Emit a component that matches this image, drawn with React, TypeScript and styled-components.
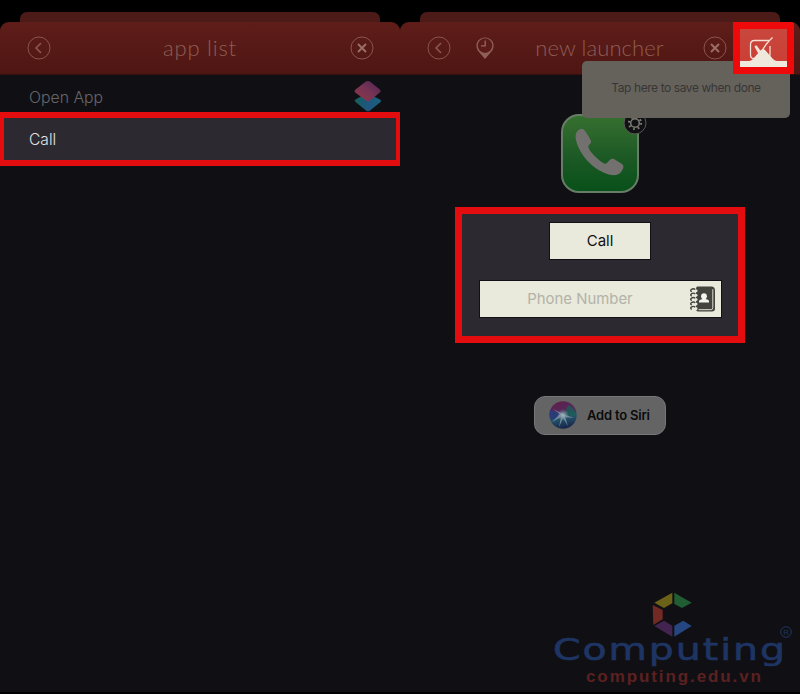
import React from 'react';
import styled, { createGlobalStyle } from 'styled-components';

const Global = createGlobalStyle`
  * { box-sizing: border-box; }
  body { margin: 0; background: #000; font-family: Inter, "Liberation Sans", sans-serif; }
  svg { display: block; flex: none; }
`;

const Page = styled.main`
  display: grid;
  grid-template-columns: 400px 400px;
  width: 800px;
  height: 694px;
  overflow: hidden;
  position: relative;
  background: #000;
`;

const Phone = styled.section`
  display: flex;
  flex-direction: column;
  height: 692px;
  padding-top: 12px;
  position: relative;
`;

const BackCard = styled.div`
  height: 10px;
  flex: none;
  margin: 0 20px;
  border-radius: 7px 7px 0 0;
  background: #4d1b17;
`;

const Card = styled.div`
  flex: 1;
  display: flex;
  flex-direction: column;
  border-radius: 9px 9px 0 0;
  overflow: hidden;
  background: #101014;
`;

const Header = styled.header<{ $cols: string }>`
  display: grid;
  grid-template-columns: ${(p) => p.$cols};
  align-items: center;
  height: 53px;
  flex: none;
  background: linear-gradient(#5f1d19, #4e1613);
  border-bottom: 1px solid #35100f;
`;

const Title = styled.h1<{ $spacing: number }>`
  display: flex;
  justify-content: center;
  margin: 0;
  font: 300 22px/26px Lato, sans-serif;
  letter-spacing: ${(p) => p.$spacing}px;
  color: #8d5d54;
  white-space: nowrap;
`;

const IconButton = styled.button`
  display: flex;
  justify-content: center;
  min-width: 0;
  padding: 0;
  border: 0;
  background: none;
`;

const Row = styled.div`
  display: flex;
  justify-content: space-between;
  height: 37px;
  flex: none;
  padding: 0 18px 0 29px;
  font-size: 15.8px;
  font-weight: 300;
  line-height: 45px;
  color: #66666a;
`;

const SelectedRow = styled.div`
  flex: none;
  height: 54px;
  padding-left: 25px;
  border: 6px solid #e30d10;
  border-left-width: 4px;
  border-right-width: 4px;
  background: #2d2930;
  color: #e2e1e4;
  font-size: 15.6px;
  font-weight: 300;
  line-height: 44px;
`;

const ShortcutWrap = styled.div`
  padding-top: 5px;
`;

const SaveFrame = styled.button`
  width: 61px;
  height: 52px;
  padding: 0;
  border: 7px solid #ee090b;
  background: linear-gradient(#c8473d, #cb3e35);
`;

const Tooltip = styled.div`
  position: absolute;
  z-index: 2;
  left: 182px;
  top: 61px;
  width: 208px;
  height: 57px;
  border-radius: 5px;
  background: #65625c;
  color: #383634;
  font-size: 12px;
  line-height: 53px;
  letter-spacing: -0.42px;
  text-align: center;
`;

const SaveSlot = styled.div`
  position: relative;
  z-index: 3;
  height: 52px;
`;

const Content = styled.div`
  flex: 1;
  display: flex;
  flex-direction: column;
  align-items: center;
  padding-top: 39px;
`;

const AppIcon = styled.div`
  position: relative;
  width: 78px;
  height: 79px;
  flex: none;
`;

const Gear = styled.div`
  position: absolute;
  left: 62px;
  top: -3px;
`;

const FormFrame = styled.div`
  display: flex;
  flex-direction: column;
  align-items: center;
  gap: 20px;
  width: 290px;
  height: 136px;
  margin-top: 14px;
  padding-top: 8px;
  flex: none;
  border: 7px solid #e30d10;
  background: #2d2930;
`;

const CallField = styled.div`
  width: 102px;
  height: 38px;
  border: 1px solid #111014;
  background: #e9e9dc;
  color: #111;
  font-size: 15px;
  line-height: 36px;
  text-align: center;
`;

const NumberField = styled.div`
  display: grid;
  grid-template-columns: 201px 8px 28px;
  align-items: center;
  width: 243px;
  height: 38px;
  border: 1px solid #111014;
  background: #e9e9dc;
  color: #b3b3a9;
  font-size: 14.9px;
  text-align: center;
`;

const SiriButton = styled.button`
  display: flex;
  align-items: center;
  gap: 10px;
  width: 132px;
  height: 39px;
  margin-top: 53px;
  padding: 0 0 2px 14px;
  flex: none;
  border: 1px solid #77777a;
  border-radius: 11px;
  background: #646464;
  color: #0b0b0c;
  font: 600 13px Inter, sans-serif;
  letter-spacing: -0.2px;
  white-space: nowrap;
`;

const Watermark = styled.div`
  position: absolute;
  right: 0;
  bottom: 0;
`;

const Back = () => (
  <svg width="24" height="24" viewBox="0 0 24 24" fill="none" stroke="#88564e">
    <circle cx="12" cy="12" r="11" />
    <path d="M14 7.2 9 12l5 4.8" strokeWidth="1.6" />
  </svg>
);

const Close = () => (
  <svg width="24" height="24" viewBox="0 0 24 24" fill="none" stroke="#88564e">
    <circle cx="12" cy="12" r="11" />
    <path d="m8 8 8 8M16 8l-8 8" strokeWidth="2" stroke="#9a6e66" />
  </svg>
);

const Pin = () => (
  <svg width="20" height="24" viewBox="0 0 20 24">
    <path d="M10 23 2.7 14.5C-.8 8.5 3 1.5 10 1.5s10.8 7 7.3 13Z" fill="#8f6058" />
    <circle cx="10" cy="9.6" r="7.3" fill="#5b1b17" />
    <path d="M10.2 4.5v5.3H6" fill="none" stroke="#97675f" strokeWidth="1.3" />
  </svg>
);

const Shortcuts = () => (
  <svg width="28" height="32" viewBox="0 0 28 32">
    <defs>
      <linearGradient id="scTop" x1="0" y1="1" x2="1" y2="0">
        <stop stopColor="#8e3444" />
        <stop offset=".5" stopColor="#773453" />
        <stop offset="1" stopColor="#4c2357" />
      </linearGradient>
      <linearGradient id="scLow">
        <stop stopColor="#126059" />
        <stop offset=".5" stopColor="#205680" />
        <stop offset="1" stopColor="#17617b" />
      </linearGradient>
    </defs>
    <path d="M1.5 19.5 13 13l13 6.5q2 1.5 0 3L16 30.5q-2 1.7-4 0L1.5 22q-1.5-1.2 0-2.5Z" fill="url(#scLow)" />
    <path d="M1.5 9.5 11.5 1.8q2.2-1.5 4.8 0l9.5 7.7q1.7 1.6 0 3L16 20.5q-2 1.6-4 0L1.5 12.8q-1.8-1.6 0-3.3Z" fill="url(#scTop)" />
  </svg>
);

const SaveIcon = () => (
  <svg width="47" height="38" viewBox="0 0 47 38">
    <path d="M29 11.5H14.500q-4 0-4 4v10q0 4 3 4H26q4 0 4-4V17" fill="none" stroke="#f4dfd5" strokeWidth="1.3" />
    <path d="m15.300 17 5 8.500Q25 15 32.500 8.500" fill="none" stroke="#f4dfd5" strokeWidth="1.500" />
    <path d="m14.500 17.500 2-1.300 5.200 7L18.500 25Z" fill="#f4dfd5" />
    <path d="M0 32h9q2 0 4-2l7.500-8.500q2.500-2.500 5 0L33 30q2 2 4 2h10v6H0Z" fill="#eee9dc" />
  </svg>
);

const PhoneIcon = () => (
  <svg width="78" height="79" viewBox="0 0 78 79">
    <defs>
      <linearGradient id="green" x1="0" y1="0" x2="0" y2="1">
        <stop stopColor="#37702f" />
        <stop offset=".55" stopColor="#1c5925" />
        <stop offset="1" stopColor="#085019" />
      </linearGradient>
    </defs>
    <rect x="1" y="1" width="76" height="77" rx="17" fill="url(#green)" stroke="#687d68" strokeWidth="2" />
    <path
      d="M16.500 17c1.500-1.700 4-3.200 6.200-1.500 2.200 2.300 5.800 8 7.200 11.200.8 2.200-1.200 3.300-2.200 4.600-1 1.500.5 4.300 2.600 7 3.500 4.400 7.900 8.200 12 10.800 2.100 1.300 3.300.5 4.500-1 1.600-2 4-4.300 6.600-2.900l7.500 4.800c2.700 2 1.300 4.700-.5 7.500-3.500 5-10 4.600-18.500.8C31.500 53.500 23 44.500 18 34.500c-3.800-8-4.500-14.300-1.500-17.500Z"
      fill="#73716f"
    />
  </svg>
);

const GearIcon = () => (
  <svg width="24" height="24" viewBox="0 0 24 24" fill="none">
    <circle cx="12" cy="12" r="11" fill="#111114" stroke="#5b5b5a" />
    <circle cx="12" cy="12" r="6" stroke="#7b7b73" strokeWidth="2.2" strokeDasharray="1.7 3.012" />
    <circle cx="12" cy="12" r="4.300" stroke="#7b7b73" strokeWidth="1.500" />
  </svg>
);

const ContactBook = () => (
  <svg width="28" height="28" viewBox="0 0 28 28" fill="none">
    <path d="M8 1.500h15q3 .5 3 4v18q0 3-3 3H9q-2-.5-2-3V4q0-2 1-2.500Z" fill="#44443f" />
    <path d="M23.800 4.300v18.400q0 2-2 2H9.500" stroke="#deded2" strokeWidth="1" />
    <circle cx="15" cy="11.200" r="2.900" fill="#f4f4ee" />
    <path d="M10 17.500v-1.700q1-1.300 3.500-1.800v-2h3v2q3 .5 3.500 1.800v1.700Z" fill="#f4f4ee" />
    {[5, 9.4, 13.8, 18.2, 22.6].map((y) => (
      <g key={y}>
        <circle cx="7" cy={y + 0.8} r="1.500" fill="#e9e9dc" />
        <path d={`M6.300 ${y - 0.5}q-2-1.500-4 0-1.400 1.500.5 2.200`} stroke="#44443f" strokeWidth="1.400" />
      </g>
    ))}
  </svg>
);

const SiriIcon = () => (
  <svg width="28" height="28" viewBox="0 0 28 28">
    <defs>
      <linearGradient id="siri" x1=".3" y1="0" x2=".5" y2="1">
        <stop stopColor="#5d204b" />
        <stop offset=".38" stopColor="#54285b" />
        <stop offset=".6" stopColor="#27576b" />
        <stop offset="1" stopColor="#16244a" />
      </linearGradient>
      <radialGradient id="glow">
        <stop stopColor="#a6b7bb" />
        <stop offset="1" stopColor="#718b98" stopOpacity="0" />
      </radialGradient>
    </defs>
    <circle cx="14" cy="14" r="13.700" fill="url(#siri)" />
    <path d="M15 14 19 4q7 2 8 11Z" fill="#176055" opacity=".75" />
    <path d="M14 14 1 9q-1 5 1 10Z" fill="#293b79" />
    <path d="m14 13 11 4-9-1 3 9-5-8-4 9 2-10-9 5 8-8-7-5Z" fill="#708a9c" />
    <circle cx="14" cy="14" r="6" fill="url(#glow)" />
  </svg>
);

const Brand = () => (
  <svg width="260" height="114" viewBox="0 0 260 114">
    <path d="m114.300 22.700 18-10v10.600l-8.300 4.700Z" fill="#6b6118" />
    <path d="m134.300 12.700 17.400 10L142 28l-7.700-4Z" fill="#205d32" />
    <path d="m112.700 25 10 5v9.300l-9.400 5.700Z" fill="#712a23" />
    <path d="m114.300 46 9.700-5.300 8.300 5v11Z" fill="#43234f" />
    <path d="m134.300 45.700 9-5 8.400 5.300-17.400 10.700Z" fill="#254680" />
    <text x="13" y="79.500" textLength="234" lengthAdjust="spacingAndGlyphs" fontFamily="DejaVu Sans, sans-serif" fontSize="30" letterSpacing="1.5" fill="#1e3564" stroke="#1e3564" strokeWidth=".6">Computing</text>
    <circle cx="246" cy="52" r="5.300" fill="none" stroke="#1e3564" />
    <text x="243.200" y="55" fontFamily="Liberation Sans, sans-serif" fontSize="8" fill="#1e3564">R</text>
    <text x="46" y="101.500" textLength="175" lengthAdjust="spacing" fontFamily="Liberation Sans, sans-serif" fontSize="17" fontWeight="700" fill="#5c2020">computing.edu.vn</text>
  </svg>
);

export default function App() {
  return (
    <>
      <Global />
      <Page>
        <Phone>
          <BackCard />
          <Card>
            <Header $cols="77px 246px 77px">
              <IconButton aria-label="Back"><Back /></IconButton>
              <Title $spacing={0.8}>app list</Title>
              <IconButton aria-label="Close"><Close /></IconButton>
            </Header>
            <Row><span>Open App</span><ShortcutWrap><Shortcuts /></ShortcutWrap></Row>
            <SelectedRow>Call</SelectedRow>
          </Card>
        </Phone>
        <Phone>
          <BackCard />
          <Card>
            <Header $cols="77px 16px 213px 18px 9px 61px">
              <IconButton aria-label="Back"><Back /></IconButton>
              <IconButton aria-label="Location and time"><Pin /></IconButton>
              <Title $spacing={0.1}>new launcher</Title>
              <IconButton aria-label="Close"><Close /></IconButton>
              <span />
              <SaveSlot><SaveFrame aria-label="Save"><SaveIcon /></SaveFrame></SaveSlot>
            </Header>
            <Content>
              <AppIcon><PhoneIcon /><Gear><GearIcon /></Gear></AppIcon>
              <FormFrame>
                <CallField>Call</CallField>
                <NumberField><span>Phone Number</span><span /><ContactBook /></NumberField>
              </FormFrame>
              <SiriButton><SiriIcon />Add to Siri</SiriButton>
            </Content>
          </Card>
          <Tooltip>Tap here to save when done</Tooltip>
        </Phone>
        <Watermark><Brand /></Watermark>
      </Page>
    </>
  );
}
